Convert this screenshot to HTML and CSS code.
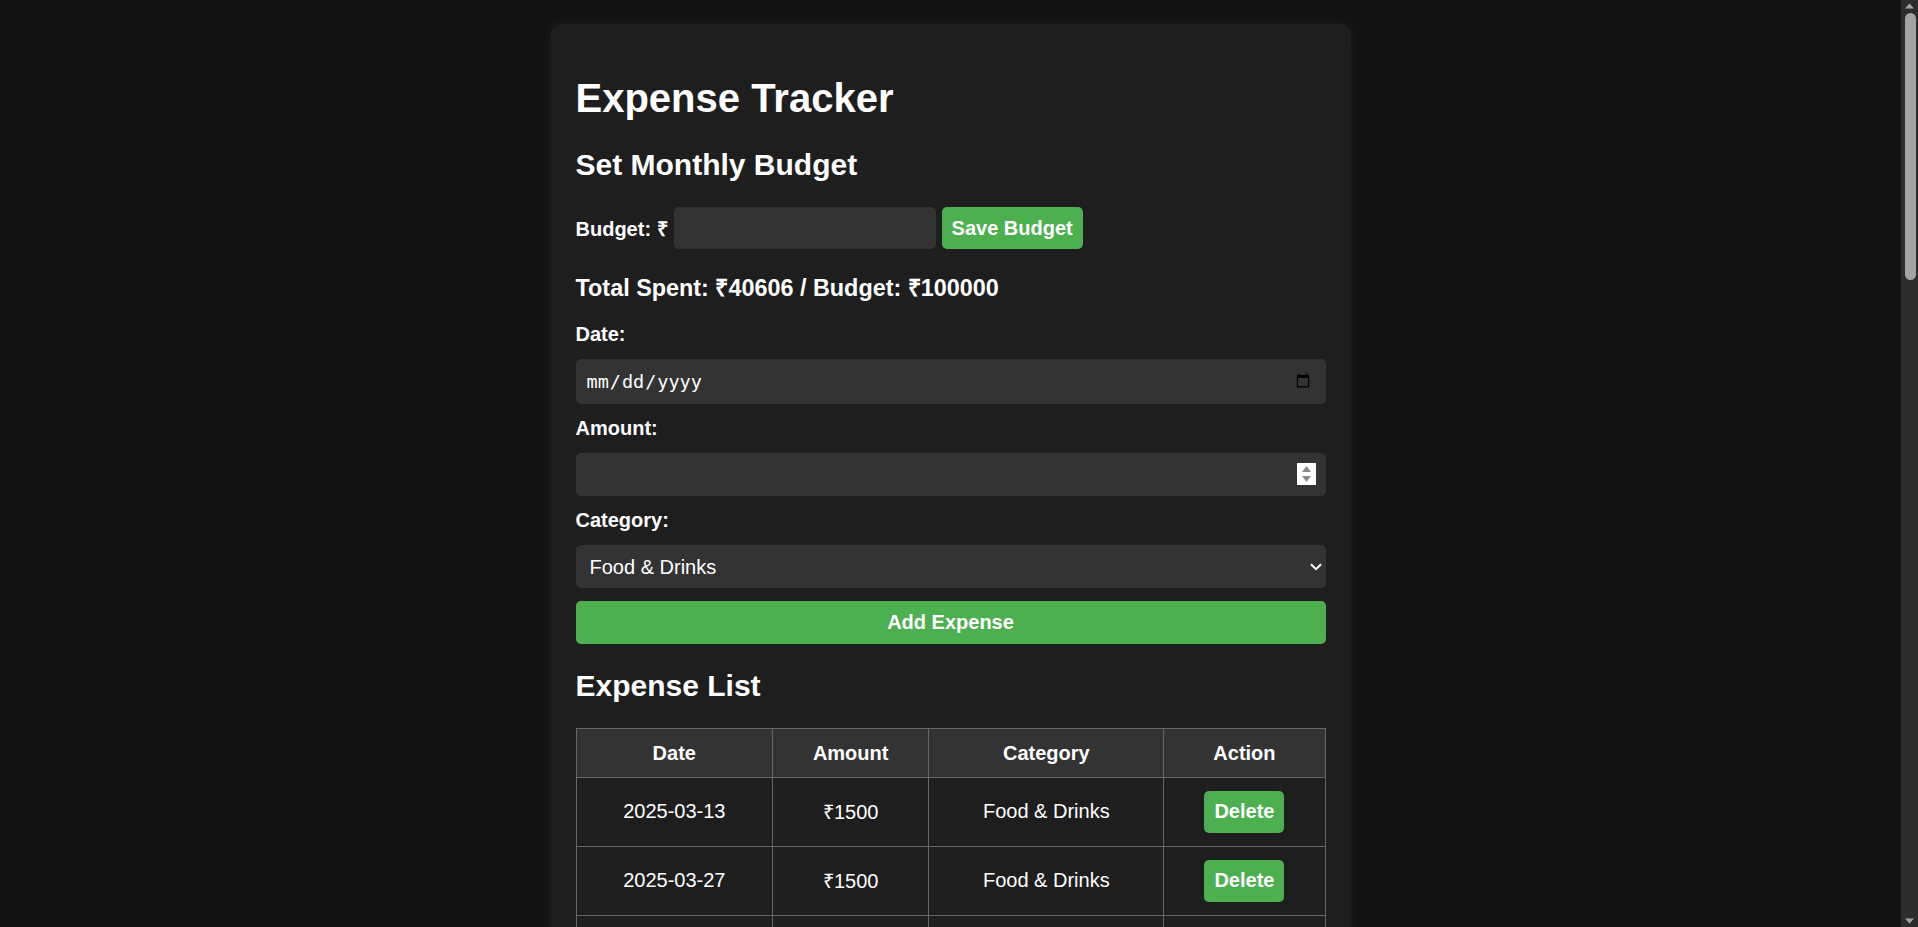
FILE: index.html
```html
<!DOCTYPE html>
<html lang="en">
<head>
<meta charset="UTF-8">
<title>Expense Tracker</title>
<link rel="stylesheet" href="styles.css">
</head>
<body>
<div class="container">
  <h1>Expense Tracker</h1>
  <h2>Set Monthly Budget</h2>
  <div class="budget-row">
    <label class="budget-label" for="budget">Budget: ₹</label>
    <input class="field budget-input" id="budget" type="number">
    <button class="btn">Save Budget</button>
  </div>
  <h3>Total Spent: ₹40606 / Budget: ₹100000</h3>
  <form class="expense-form">
    <label class="form-label" for="date">Date:</label>
    <input class="field date-field" id="date" type="date">
    <label class="form-label" for="amount">Amount:</label>
    <div class="control-wrap">
      <input class="field amount-field" id="amount" type="number">
      <span class="spinner">
        <svg width="19" height="22" viewBox="0 0 19 22"><rect width="19" height="22" fill="#fff"/><path d="M9.5 3 L14 9 L5 9 Z" fill="#8a8a8a"/><path d="M5 13 L14 13 L9.5 19 Z" fill="#8a8a8a"/></svg>
      </span>
    </div>
    <label class="form-label" for="category">Category:</label>
    <div class="control-wrap">
      <select class="field select-field" id="category">
        <option>Food &amp; Drinks</option>
        <option>Transport</option>
        <option>Shopping</option>
        <option>Bills</option>
        <option>Entertainment</option>
        <option>Other</option>
      </select>
      <span class="chevron">
        <svg width="12" height="8" viewBox="0 0 12 8"><path d="M1 1.2 L6 6.2 L11 1.2" fill="none" stroke="#fff" stroke-width="2"/></svg>
      </span>
    </div>
    <button type="button" class="btn btn-wide">Add Expense</button>
  </form>
  <h2>Expense List</h2>
  <table class="expense-table">
    <thead>
      <tr><th class="c-date">Date</th><th class="c-amount">Amount</th><th class="c-cat">Category</th><th class="c-act">Action</th></tr>
    </thead>
    <tbody>
      <tr><td>2025-03-13</td><td>₹1500</td><td>Food &amp; Drinks</td><td><button class="btn">Delete</button></td></tr>
      <tr><td>2025-03-27</td><td>₹1500</td><td>Food &amp; Drinks</td><td><button class="btn">Delete</button></td></tr>
      <tr><td>2025-03-02</td><td>₹850</td><td>Transport</td><td><button class="btn">Delete</button></td></tr>
      <tr><td>2025-03-04</td><td>₹2300</td><td>Shopping</td><td><button class="btn">Delete</button></td></tr>
      <tr><td>2025-03-05</td><td>₹1200</td><td>Bills</td><td><button class="btn">Delete</button></td></tr>
      <tr><td>2025-03-06</td><td>₹640</td><td>Food &amp; Drinks</td><td><button class="btn">Delete</button></td></tr>
      <tr><td>2025-03-07</td><td>₹1100</td><td>Entertainment</td><td><button class="btn">Delete</button></td></tr>
      <tr><td>2025-03-08</td><td>₹920</td><td>Transport</td><td><button class="btn">Delete</button></td></tr>
      <tr><td>2025-03-09</td><td>₹1750</td><td>Shopping</td><td><button class="btn">Delete</button></td></tr>
      <tr><td>2025-03-10</td><td>₹2100</td><td>Bills</td><td><button class="btn">Delete</button></td></tr>
      <tr><td>2025-03-11</td><td>₹480</td><td>Food &amp; Drinks</td><td><button class="btn">Delete</button></td></tr>
      <tr><td>2025-03-12</td><td>₹1300</td><td>Other</td><td><button class="btn">Delete</button></td></tr>
      <tr><td>2025-03-14</td><td>₹760</td><td>Transport</td><td><button class="btn">Delete</button></td></tr>
      <tr><td>2025-03-15</td><td>₹1450</td><td>Entertainment</td><td><button class="btn">Delete</button></td></tr>
      <tr><td>2025-03-16</td><td>₹990</td><td>Food &amp; Drinks</td><td><button class="btn">Delete</button></td></tr>
      <tr><td>2025-03-17</td><td>₹2500</td><td>Shopping</td><td><button class="btn">Delete</button></td></tr>
      <tr><td>2025-03-18</td><td>₹1800</td><td>Bills</td><td><button class="btn">Delete</button></td></tr>
      <tr><td>2025-03-19</td><td>₹560</td><td>Transport</td><td><button class="btn">Delete</button></td></tr>
      <tr><td>2025-03-20</td><td>₹1250</td><td>Food &amp; Drinks</td><td><button class="btn">Delete</button></td></tr>
      <tr><td>2025-03-21</td><td>₹700</td><td>Other</td><td><button class="btn">Delete</button></td></tr>
      <tr><td>2025-03-22</td><td>₹1600</td><td>Entertainment</td><td><button class="btn">Delete</button></td></tr>
      <tr><td>2025-03-23</td><td>₹1150</td><td>Shopping</td><td><button class="btn">Delete</button></td></tr>
      <tr><td>2025-03-24</td><td>₹890</td><td>Transport</td><td><button class="btn">Delete</button></td></tr>
      <tr><td>2025-03-25</td><td>₹1420</td><td>Food &amp; Drinks</td><td><button class="btn">Delete</button></td></tr>
      <tr><td>2025-03-26</td><td>₹2000</td><td>Bills</td><td><button class="btn">Delete</button></td></tr>
      <tr><td>2025-03-28</td><td>₹630</td><td>Food &amp; Drinks</td><td><button class="btn">Delete</button></td></tr>
      <tr><td>2025-03-29</td><td>₹1326</td><td>Shopping</td><td><button class="btn">Delete</button></td></tr>
      <tr><td>2025-03-30</td><td>₹540</td><td>Transport</td><td><button class="btn">Delete</button></td></tr>
      <tr><td>2025-03-31</td><td>₹1000</td><td>Other</td><td><button class="btn">Delete</button></td></tr>
      <tr><td>2025-03-01</td><td>₹1800</td><td>Bills</td><td><button class="btn">Delete</button></td></tr>
      <tr><td>2025-03-03</td><td>₹700</td><td>Entertainment</td><td><button class="btn">Delete</button></td></tr>
      <tr><td>2025-03-13</td><td>₹450</td><td>Food &amp; Drinks</td><td><button class="btn">Delete</button></td></tr>
      <tr><td>2025-03-27</td><td>₹900</td><td>Transport</td><td><button class="btn">Delete</button></td></tr>
    </tbody>
  </table>
</div>
<div class="scrollbar" aria-hidden="true">
  <svg width="17" height="927" viewBox="0 0 17 927">
    <rect width="17" height="927" fill="#2c2c2c"/>
    <path d="M8.5 3.5 L13 8.5 L4 8.5 Z" fill="#a3a3a3"/>
    <rect x="4" y="13" width="11" height="267" rx="5.5" fill="#a3a3a3"/>
    <path d="M4 918.5 L13 918.5 L8.5 923.5 Z" fill="#a3a3a3"/>
  </svg>
</div>
</body>
</html>
```

FILE: styles.css
```css
body {
  margin: 0;
  padding: 24px 17px 24px 0;
  background: #121212;
  color: #ffffff;
  font-family: "Liberation Sans", Arial, sans-serif;
  font-size: 20px;
}

.container {
  box-sizing: border-box;
  width: 800px;
  margin: 0 auto;
  padding: 25px;
  background: #1e1e1e;
  border-radius: 12px;
  box-shadow: 0 0 14px rgba(255, 255, 255, 0.06);
}

h1 {
  font-size: 40px;
  margin: 27px 0;
}

h2 {
  font-size: 30px;
  margin: 25px 0;
}

h3 {
  font-size: 23.4px;
  margin: 21.5px 0 20.5px;
}

.budget-row {
  display: flex;
  align-items: center;
  gap: 6px;
  height: 42px;
}

.budget-label {
  font-weight: bold;
}

.field {
  box-sizing: border-box;
  border: none;
  border-radius: 5px;
  background: #333333;
  color: #ffffff;
  font-family: "Liberation Sans", Arial, sans-serif;
  font-size: 20px;
  padding: 10px;
  outline: none;
}

.budget-input {
  width: 262px;
  height: 42px;
}

.field::-webkit-inner-spin-button,
.field::-webkit-outer-spin-button {
  -webkit-appearance: none;
  margin: 0;
}

.btn {
  box-sizing: border-box;
  border: none;
  border-radius: 5px;
  background: #4caf50;
  color: #ffffff;
  font-family: "Liberation Sans", Arial, sans-serif;
  font-weight: bold;
  font-size: 20px;
  padding: 0 10px;
  height: 42px;
  cursor: pointer;
}

.expense-form {
  display: flex;
  flex-direction: column;
  gap: 13px;
}

.form-label {
  font-weight: bold;
  line-height: 23px;
}

.date-field {
  width: 100%;
  height: 45px;
  font-family: "DejaVu Sans Mono", "Liberation Mono", monospace;
  font-size: 18.5px;
  padding: 0 10px;
  color-scheme: light;
}

.date-field::-webkit-datetime-edit {
  color: #ffffff;
}

.date-field::-webkit-calendar-picker-indicator {
  width: 16px;
  height: 18px;
  padding: 0;
  margin: 0 5px 0 0;
}

.control-wrap {
  position: relative;
}

.amount-field {
  width: 100%;
  height: 43px;
  display: block;
}

.spinner {
  position: absolute;
  right: 10px;
  top: 10px;
  width: 19px;
  height: 22px;
  display: block;
}

.spinner svg,
.chevron svg {
  display: block;
}

.select-field {
  -webkit-appearance: none;
  appearance: none;
  display: block;
  width: 100%;
  height: 43px;
  padding: 0 14px;
}

.chevron {
  position: absolute;
  right: 4px;
  top: 18px;
  width: 12px;
  height: 8px;
  display: block;
  pointer-events: none;
}

.btn-wide {
  width: 100%;
  height: 43px;
}

.expense-table {
  width: 100%;
  border-collapse: collapse;
  font-size: 20px;
}

.expense-table th,
.expense-table td {
  border: 1px solid #666666;
  text-align: center;
}

.expense-table th {
  background: #333333;
  font-weight: bold;
  padding: 12.5px 12px 12px;
}

.expense-table td {
  padding: 13px 12px;
}

.c-date { width: 173.5px; }
.c-amount { width: 132px; }
.c-cat { width: 211.5px; }
.c-act { width: 137px; }

.scrollbar {
  position: fixed;
  top: 0;
  right: 0;
  width: 17px;
  height: 927px;
}

.scrollbar svg {
  display: block;
}
```
